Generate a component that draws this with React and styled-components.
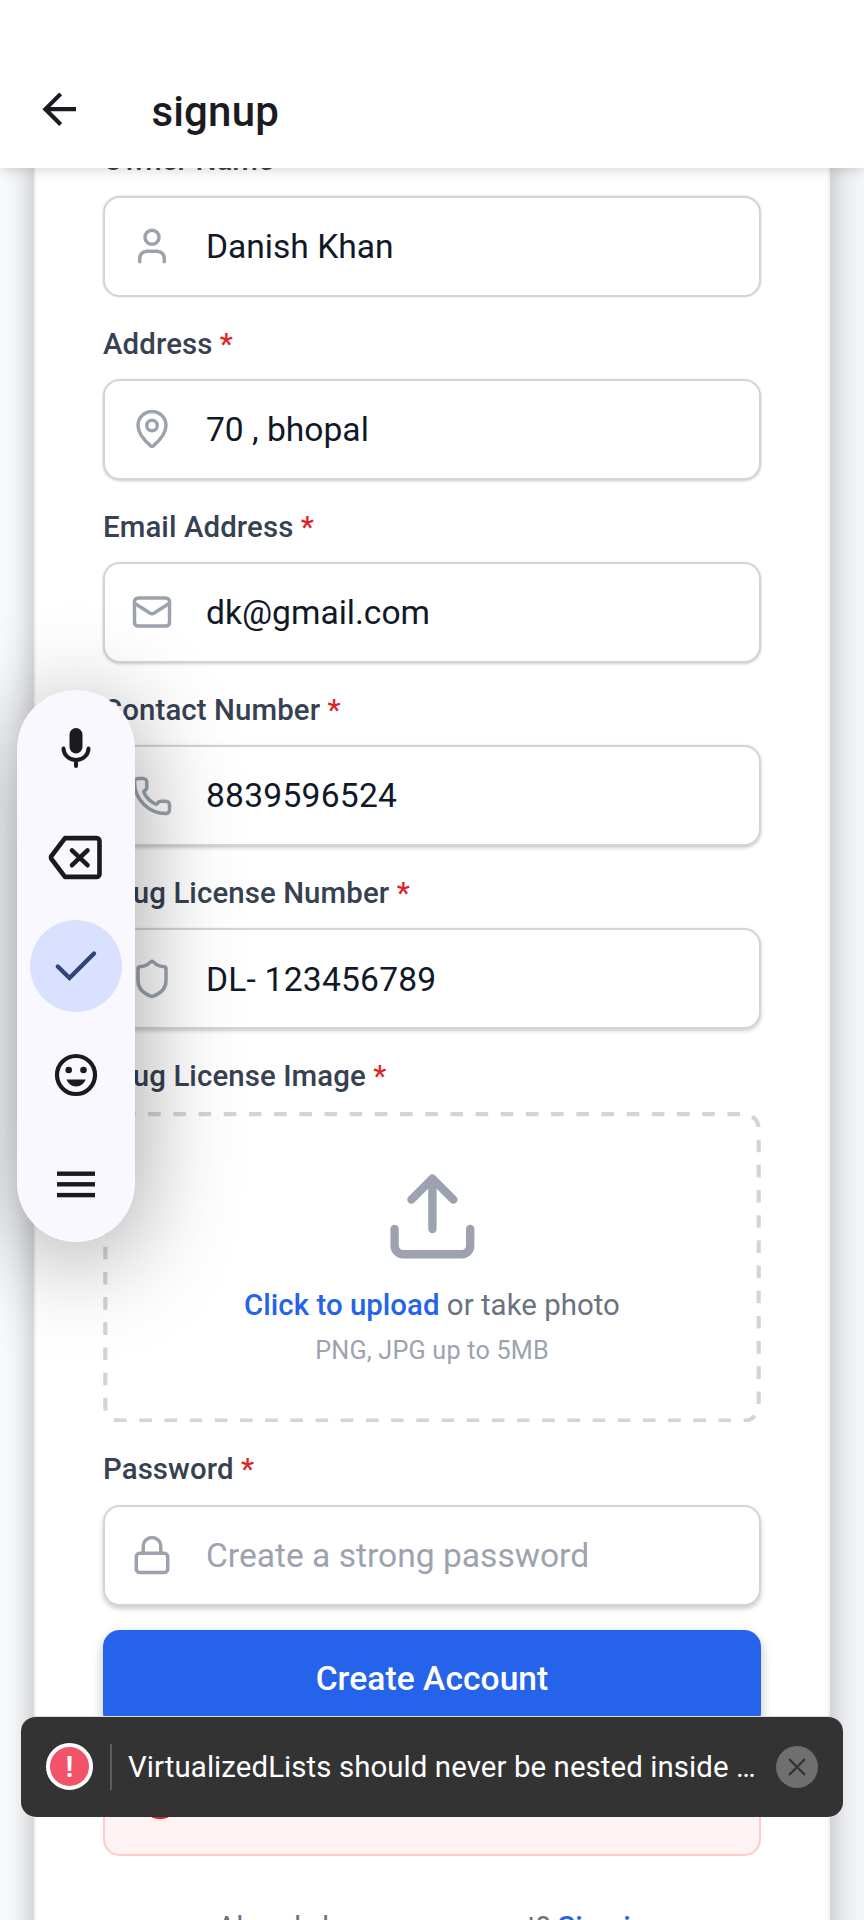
import React from "react";
import styled, { createGlobalStyle } from "styled-components";
import { User, MapPin, Mail, Phone, Shield, Upload, Lock, CircleAlert } from "lucide-react";

const GlobalStyle = createGlobalStyle`
  *, *::before, *::after { box-sizing: border-box; }
  body {
    margin: 0;
    background: #fff;
    font-family: Roboto, sans-serif;
  }
`;

const Screen = styled.div`
  position: relative;
  display: flex;
  flex-direction: column;
  width: 864px;
  height: 1920px;
  overflow: hidden;
  background: linear-gradient(90deg, #f8fafc, #f4f6f9);
`;

const Header = styled.header`
  position: relative;
  z-index: 2;
  flex: none;
  display: flex;
  align-items: center;
  gap: 67px;
  height: 168px;
  padding: 56px 34px 0;
  background: #fff;
  box-shadow: 0 1px 13px rgba(0, 0, 0, 0.18);
`;

const Title = styled.h1`
  margin: 0;
  font-size: 42px;
  line-height: 50px;
  font-weight: 500;
  letter-spacing: 0.2px;
  color: #1c1b1f;
`;

const BackIcon = styled.svg`
  display: block;
  width: 50.4px;
  height: 50.4px;
  margin-bottom: 6px;
`;

const Scroll = styled.main`
  flex: 1;
  min-height: 0;
  padding: 0 34px;
`;

const Card = styled.section`
  height: 1900px;
  margin-top: -25.7px;
  padding: 0 67px;
  background: #fff;
  border: 2px solid #f1f3f5;
  border-width: 0 2px;
  box-shadow: 0 0 30px rgba(0, 0, 0, 0.28);
`;

const Field = styled.div`
  display: flex;
  flex-direction: column;
  margin-bottom: 29px;
`;

const Label = styled.label`
  margin-bottom: 17.4px;
  font-size: 29.4px;
  line-height: 36px;
  font-weight: 500;
  letter-spacing: 0.1px;
  color: #374151;
`;

const Required = styled.span`
  color: #dc2626;
`;

const InputBox = styled.div`
  display: flex;
  align-items: center;
  gap: 33px;
  height: 100.8px;
  padding: 0 26px;
  border: 2px solid #d1d5db;
  border-radius: 16.8px;
  background: #fff;
  color: #9ca3af;
  box-shadow: 0 ${(p) => p.$lift}px ${(p) => p.$lift + 2}px rgba(0, 0, 0, 0.2);

  svg { flex: none; }
`;

const Value = styled.span`
  padding-top: 1.4px;
  font-size: 33.6px;
  line-height: 40px;
  letter-spacing: ${(p) => p.$tracking || 0}px;
  color: ${(p) => (p.$placeholder ? "#9ca3af" : "#111827")};
`;

const UploadBox = styled.div`
  position: relative;
  display: flex;
  flex-direction: column;
  align-items: center;
  height: 310.8px;
  padding-top: 54.4px;
  color: #9ca3af;
`;

const DashedOutline = styled.svg`
  position: absolute;
  inset: 0;
  width: 100%;
  height: 100%;
`;

const UploadText = styled.p`
  margin: 20px 0 0;
  font-size: 29.4px;
  line-height: 36px;
  letter-spacing: 0.03px;
  color: #6b7280;
`;

const UploadLink = styled.span`
  font-weight: 500;
  color: #2563eb;
`;

const UploadHint = styled.p`
  margin: 13px 0 0;
  font-size: 25.2px;
  line-height: 30px;
  letter-spacing: 0.2px;
  color: #9ca3af;
`;

const SubmitButton = styled.button`
  display: block;
  width: 100%;
  height: 99px;
  margin-top: -5px;
  padding: 0;
  border: 0;
  border-radius: 16.8px;
  background: #2563eb;
  color: #fff;
  font: 500 33.6px/40px Roboto, sans-serif;
  letter-spacing: 0.05px;
  box-shadow: 0 5px 12px rgba(0, 0, 0, 0.26);
`;

const ErrorBox = styled.div`
  display: flex;
  align-items: center;
  height: 112px;
  margin-top: 15px;
  padding: 0 34px;
  border: 2px solid #fecaca;
  border-radius: 16.8px;
  background: #fef2f2;
  color: #dc2626;
`;

const SignInPrompt = styled.p`
  margin: 53px 0 0;
  text-align: center;
  font-size: 29.4px;
  line-height: 36px;
  color: #6b7280;
`;

const SignInLink = styled.span`
  font-weight: 500;
  color: #2563eb;
`;

const KeyboardPanel = styled.aside`
  position: absolute;
  z-index: 3;
  left: 17px;
  top: 690px;
  display: flex;
  flex-direction: column;
  align-items: center;
  justify-content: space-between;
  width: 118px;
  height: 552px;
  padding: 12px 0;
  border-radius: 59px;
  background: #faf8ff;
  box-shadow: 0 16px 100px rgba(0, 0, 0, 0.38);
`;

const PanelKey = styled.div`
  display: flex;
  align-items: center;
  justify-content: center;
  width: 92.5px;
  height: 92.5px;
  border-radius: 50%;
  background: ${(p) => (p.$active ? "#dae1ff" : "transparent")};

  svg { display: block; overflow: visible; }
`;

const Toast = styled.div`
  position: absolute;
  z-index: 3;
  left: 21px;
  right: 21px;
  top: 1716px;
  display: flex;
  align-items: center;
  height: 100.5px;
  padding: 0 25px;
  border-radius: 15px;
  border-top: 1px solid #dcdcdc;
  background: #333;
`;

const ToastBadge = styled.div`
  flex: none;
  display: flex;
  align-items: center;
  justify-content: center;
  width: 47px;
  height: 47px;
  border: 4px solid #fff;
  border-radius: 50%;
  background: #f35369;
  color: #fff;
  font-size: 29.4px;
  line-height: 36px;
  font-weight: 600;
`;

const ToastDivider = styled.div`
  flex: none;
  width: 2px;
  height: 46px;
  margin: 0 16px 0 17px;
  background: #5c5c5c;
`;

const ToastText = styled.span`
  flex: 1;
  white-space: nowrap;
  font-size: 29.4px;
  line-height: 36px;
  letter-spacing: 0.09px;
  color: #fff;
`;

const ToastClose = styled.div`
  flex: none;
  display: flex;
  align-items: center;
  justify-content: center;
  width: 42px;
  height: 42px;
  border-radius: 50%;
  background: #6f6f6f;
`;

const fields = [
  { label: "Owner Name", value: "Danish Khan", icon: User, lift: 0 },
  { label: "Address", value: "70 , bhopal", icon: MapPin, lift: 1 },
  { label: "Email Address", value: "dk@gmail.com", icon: Mail, lift: 1 },
  { label: "Contact Number", value: "8839596524", icon: Phone, lift: 1.5, tracking: 0.25 },
  { label: "Drug License Number", value: "DL- 123456789", icon: Shield, lift: 2, tracking: 0.22 },
];

function FieldLabel({ children }) {
  return (
    <Label>
      {children} <Required>*</Required>
    </Label>
  );
}

function TextField({ label, value, icon: Icon, lift, tracking, placeholder }) {
  return (
    <Field>
      <FieldLabel>{label}</FieldLabel>
      <InputBox $lift={lift}>
        <Icon size={42} strokeWidth={2} />
        <Value $tracking={tracking} $placeholder={placeholder}>{value}</Value>
      </InputBox>
    </Field>
  );
}

export default function App() {
  return (
    <>
      <GlobalStyle />
      <Screen>
        <Header>
          <BackIcon viewBox="0 0 24 24" fill="#1c1b1f">
            <path d="M20 11H7.83l5.59-5.59L12 4l-8 8 8 8 1.41-1.41L7.83 13H20v-2z" />
          </BackIcon>
          <Title>signup</Title>
        </Header>
        <Scroll>
          <Card>
            {fields.map((f) => (
              <TextField key={f.label} {...f} />
            ))}
            <Field>
              <FieldLabel>Drug License Image</FieldLabel>
              <UploadBox>
                <DashedOutline viewBox="0 0 658 311">
                  <rect
                    x="2.1" y="2.1" width="653.8" height="306.8" rx="14.7"
                    fill="none" stroke="#d1d5db" strokeWidth="4.2"
                    strokeDasharray="12.6 12.6" strokeDashoffset="-3"
                  />
                </DashedOutline>
                <Upload size={100.8} strokeWidth={2} />
                <UploadText>
                  <UploadLink>Click to upload</UploadLink> or take photo
                </UploadText>
                <UploadHint>PNG, JPG up to 5MB</UploadHint>
              </UploadBox>
            </Field>
            <TextField label="Password" value="Create a strong password" icon={Lock} lift={3} placeholder />
            <SubmitButton type="button">Create Account</SubmitButton>
            <ErrorBox>
              <CircleAlert size={42} strokeWidth={2} />
            </ErrorBox>
            <SignInPrompt>
              Already have an account? <SignInLink>Sign in</SignInLink>
            </SignInPrompt>
          </Card>
        </Scroll>

        <KeyboardPanel>
          <PanelKey>
            <svg width="30" height="40" viewBox="0 0 30 40">
              <rect x="8.5" y="0" width="13" height="25.5" rx="6.5" fill="#1b1b1f" />
              <path d="M2.5 20.5a12.5 11.5 0 0 0 25 0M15 32v6" fill="none" stroke="#1b1b1f" strokeWidth="4" strokeLinecap="round" />
            </svg>
          </PanelKey>
          <PanelKey>
            <svg width="54" height="43" viewBox="0.5 0.6 54 43" fill="none" stroke="#1b1b1f" strokeWidth="4.6" strokeLinejoin="round" strokeLinecap="round">
              <path d="M16.5 2.7H48a3 3 0 0 1 3 3V38.5a3 3 0 0 1-3 3H16.5L2.6 23.1a2 2 0 0 1 0-2z" />
              <path d="M23.5 15 39 29.8M39 15 23.5 29.8" />
            </svg>
          </PanelKey>
          <PanelKey $active>
            <svg width="42" height="30" viewBox="0 0 42 30" fill="none" stroke="#30437a" strokeWidth="4.4" strokeLinecap="round">
              <path d="M2.8 15.5 14.5 27 39 2.5" />
            </svg>
          </PanelKey>
          <PanelKey>
            <svg width="42" height="42" viewBox="0 0 42 42" fill="#1b1b1f">
              <circle cx="21" cy="21" r="19" fill="none" stroke="#1b1b1f" strokeWidth="4.2" />
              <circle cx="13.7" cy="16" r="3.3" />
              <circle cx="28.5" cy="16" r="3.3" />
              <path d="M11.5 25.4h19.2c-1.6 4-5 7-9.6 7s-8-3-9.6-7z" />
            </svg>
          </PanelKey>
          <PanelKey>
            <svg width="38" height="26" viewBox="0 -0.5 38 26" fill="#1b1b1f">
              <rect width="38" height="4.4" y="0" />
              <rect width="38" height="4.4" y="10.6" />
              <rect width="38" height="4.4" y="21.4" />
            </svg>
          </PanelKey>
        </KeyboardPanel>

        <Toast>
          <ToastBadge>!</ToastBadge>
          <ToastDivider />
          <ToastText>VirtualizedLists should never be nested inside …</ToastText>
          <ToastClose>
            <svg width="18" height="18" viewBox="0 0 18 18" stroke="#333" strokeWidth="2.4">
              <path d="M1 1 17 17M17 1 1 17" />
            </svg>
          </ToastClose>
        </Toast>
      </Screen>
    </>
  );
}
